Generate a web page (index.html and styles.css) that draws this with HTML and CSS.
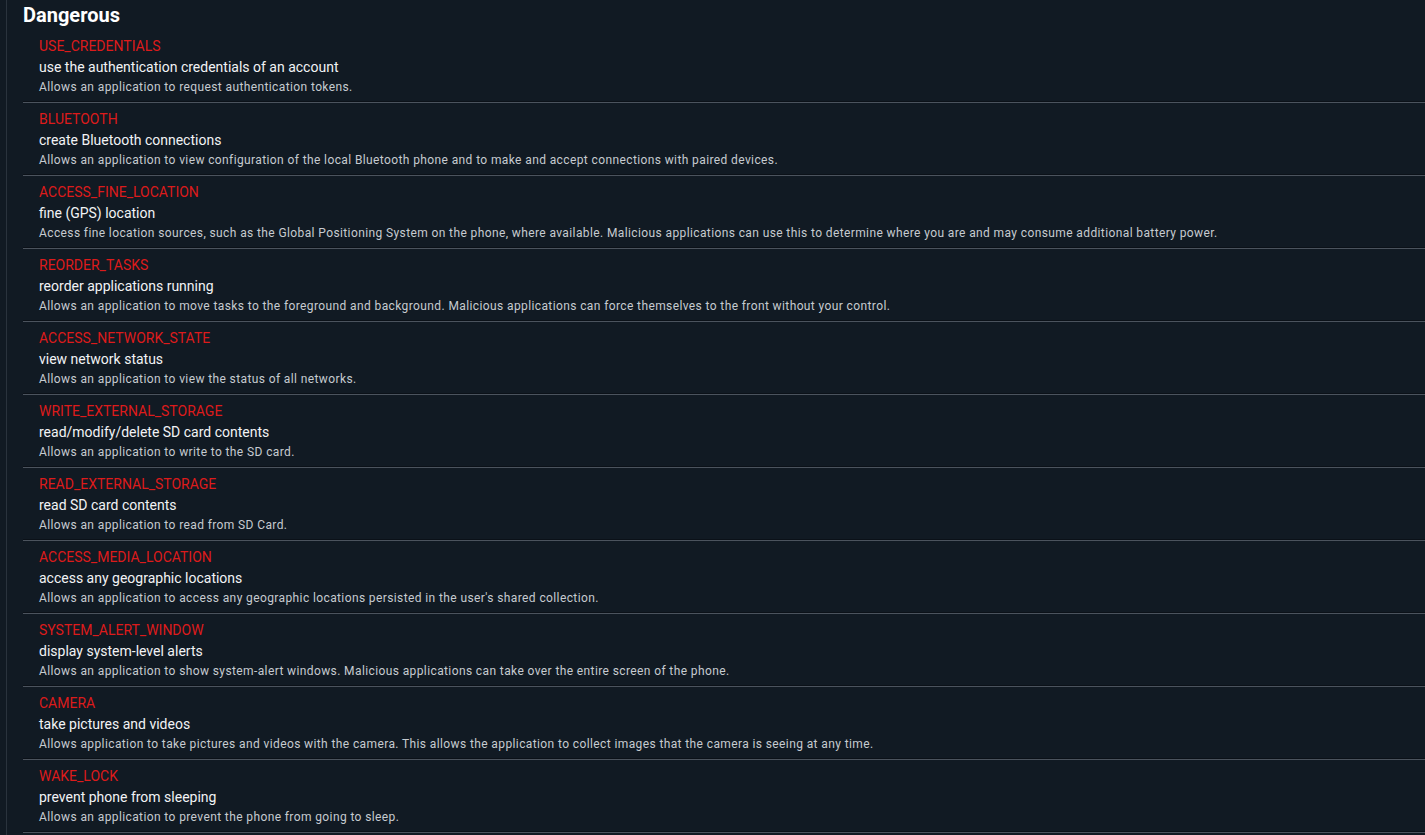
FILE: index.html
```html
<!DOCTYPE html>
<html>
<head>
<meta charset="utf-8">
<link rel="stylesheet" href="styles.css">
</head>
<body>
<div class="panel">
  <h2 class="title">Dangerous</h2>
  <ul class="perms">
    <li class="perm"><div class="name">USE_CREDENTIALS</div><div class="label">use the authentication credentials of an account</div><div class="desc">Allows an application to request authentication tokens.</div></li>
    <li class="perm"><div class="name">BLUETOOTH</div><div class="label">create Bluetooth connections</div><div class="desc">Allows an application to view configuration of the local Bluetooth phone and to make and accept connections with paired devices.</div></li>
    <li class="perm"><div class="name">ACCESS_FINE_LOCATION</div><div class="label">fine (GPS) location</div><div class="desc">Access fine location sources, such as the Global Positioning System on the phone, where available. Malicious applications can use this to determine where you are and may consume additional battery power.</div></li>
    <li class="perm"><div class="name">REORDER_TASKS</div><div class="label">reorder applications running</div><div class="desc">Allows an application to move tasks to the foreground and background. Malicious applications can force themselves to the front without your control.</div></li>
    <li class="perm"><div class="name">ACCESS_NETWORK_STATE</div><div class="label">view network status</div><div class="desc">Allows an application to view the status of all networks.</div></li>
    <li class="perm"><div class="name">WRITE_EXTERNAL_STORAGE</div><div class="label">read/modify/delete SD card contents</div><div class="desc">Allows an application to write to the SD card.</div></li>
    <li class="perm"><div class="name">READ_EXTERNAL_STORAGE</div><div class="label">read SD card contents</div><div class="desc">Allows an application to read from SD Card.</div></li>
    <li class="perm"><div class="name">ACCESS_MEDIA_LOCATION</div><div class="label">access any geographic locations</div><div class="desc">Allows an application to access any geographic locations persisted in the user's shared collection.</div></li>
    <li class="perm"><div class="name">SYSTEM_ALERT_WINDOW</div><div class="label">display system-level alerts</div><div class="desc">Allows an application to show system-alert windows. Malicious applications can take over the entire screen of the phone.</div></li>
    <li class="perm"><div class="name">CAMERA</div><div class="label">take pictures and videos</div><div class="desc">Allows application to take pictures and videos with the camera. This allows the application to collect images that the camera is seeing at any time.</div></li>
    <li class="perm"><div class="name">WAKE_LOCK</div><div class="label">prevent phone from sleeping</div><div class="desc">Allows an application to prevent the phone from going to sleep.</div></li>
  </ul>
</div>
</body>
</html>
```
FILE: styles.css
```css
html, body {
  margin: 0;
  padding: 0;
  background: #111a23;
  height: 100%;
  overflow: hidden;
}
body {
  font-family: Roboto, "Liberation Sans", sans-serif;
  color: #e9ecef;
}
.panel {
  margin-left: 6px;
  border-left: 1px solid #2a333d;
  min-height: 100%;
  padding-left: 16px;
}
.title {
  margin: 0;
  padding-top: 3px;
  font-size: 20px;
  line-height: 24px;
  font-weight: 700;
  color: #ffffff;
  height: 30px;
  box-sizing: border-box;
}
.perms {
  list-style: none;
  margin: 0;
  padding: 0;
}
.perm {
  padding: 6px 0 6px 16px;
  border-bottom: 1px solid #4b535d;
  box-shadow: inset 0 -1px 0 #0b1118;
}
.name {
  color: #dd1b1b;
  font-size: 14px;
  line-height: 21px;
}
.label {
  color: #f1f3f5;
  font-size: 14px;
  line-height: 21px;
}
.desc {
  color: #c6cbd0;
  font-size: 12px;
  line-height: 18px;
  letter-spacing: 0.39px;
}
```
